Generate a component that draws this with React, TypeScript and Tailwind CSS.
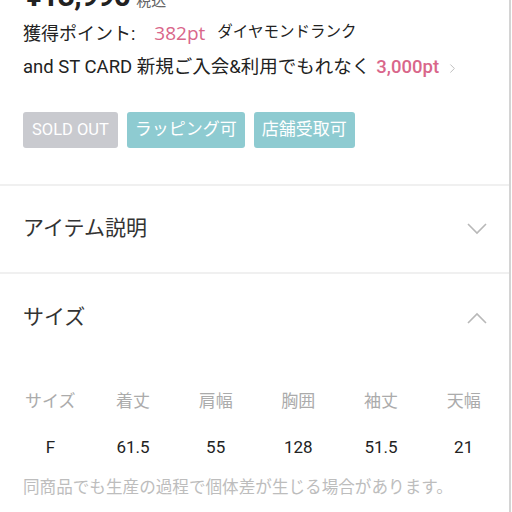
import { ChevronRight } from 'lucide-react';

const cols = ['サイズ', '着丈', '肩幅', '胸囲', '袖丈', '天幅'];
const vals = ['F', '61.5', '55', '128', '51.5', '21'];

function Chevron({ up }: { up?: boolean }) {
  return (
    <svg width="20" height="12" viewBox="0 0 20 12" className="mr-[-1px]">
      <polyline
        points={up ? '1,11 10,2 19,11' : '1,1 10,10 19,1'}
        fill="none"
        stroke="#b8b8b8"
        strokeWidth="1.6"
      />
    </svg>
  );
}

export default function App() {
  return (
    <div
      className="w-[511px] h-[512px] overflow-hidden bg-white border-r-2 border-[#d4d4d4] text-[#222]"
      style={{ fontFamily: "Roboto, 'Noto Sans CJK JP', sans-serif" }}
    >
      {/* Price (scrolled off the top) */}
      <div className="px-[26px] -mt-[19px] flex items-baseline gap-[6px] h-[30px]">
        <span className="text-[30px] font-bold leading-[30px] tracking-tight">¥13,990</span>
        <span className="text-[15px] text-[#666]">税込</span>
      </div>

      {/* Points */}
      <div className="px-[23px] mt-[10px] h-[24px] flex items-center text-[18px]">
        <span>獲得ポイント:</span>
        <span className="ml-[19px] text-[19px] text-[#d9668a]" style={{ fontFamily: "'Open Sans', sans-serif" }}>
          382pt
        </span>
        <span className="ml-[12px] text-[15.5px]">ダイヤモンドランク</span>
      </div>
      <div className="px-[23px] mt-[11px] h-[24px] flex items-center text-[18.5px]">
        <span>and ST CARD 新規ご入会&amp;利用でもれなく</span>
        <span className="ml-[6px] text-[#d9668a] font-medium">3,000pt</span>
        <ChevronRight className="ml-[6px] w-[15px] h-[15px] text-[#bbb]" strokeWidth={1.5} />
      </div>

      {/* Badges */}
      <div className="px-[23px] mt-[32px] flex gap-[9px]">
        <span className="h-[36px] px-[9px] flex items-center rounded-[3px] bg-[#c9cacf] text-white text-[16.5px]">
          SOLD OUT
        </span>
        <span className="h-[36px] px-[8px] flex items-center rounded-[3px] bg-[#8ecbd1] text-white text-[17px]">
          ラッピング可
        </span>
        <span className="h-[36px] px-[8px] flex items-center rounded-[3px] bg-[#8ecbd1] text-white text-[17px]">
          店舗受取可
        </span>
      </div>

      {/* Accordion: item description */}
      <div className="mt-[36px] border-t-2 border-[#f0f0f0]">
        <div className="h-[86px] px-[23px] flex items-center justify-between">
          <span className="text-[21px] text-[#333]">アイテム説明</span>
          <Chevron />
        </div>
      </div>

      {/* Accordion: size */}
      <div className="border-t-2 border-[#f0f0f0]">
        <div className="h-[88px] px-[23px] flex items-center justify-between">
          <span className="text-[21px] text-[#333]">サイズ</span>
          <Chevron up />
        </div>

        <div className="ml-[9px] w-[496px] mt-[27px] grid grid-cols-6 text-center">
          {cols.map((c) => (
            <div key={c} className="text-[17px] leading-[24px] text-[#ababab]">
              {c}
            </div>
          ))}
          {vals.map((v, i) => (
            <div key={i} className="mt-[22px] text-[17px] leading-[24px] text-[#222]">
              {v}
            </div>
          ))}
        </div>

        <p className="px-[23px] mt-[17px] text-[16.6px] leading-[24px] text-[#bdbdbd] whitespace-nowrap">
          同商品でも生産の過程で個体差が生じる場合があります。
        </p>
      </div>
    </div>
  );
}
